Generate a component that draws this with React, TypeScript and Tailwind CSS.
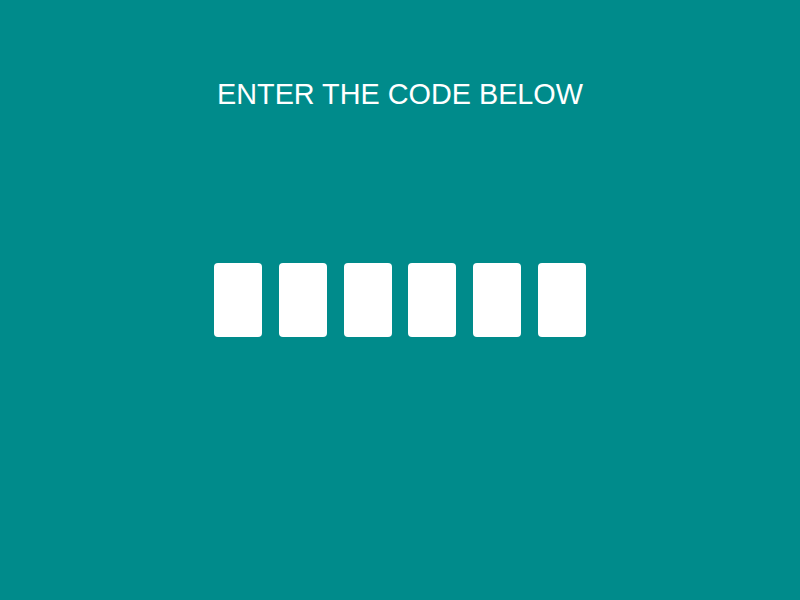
export default function App() {
  return (
    <div className="w-[800px] h-[600px] bg-[#008b8b] flex flex-col items-center pt-[78px]" style={{ fontFamily: '"Liberation Sans", Arial, sans-serif' }}>
      <h1 className="text-white text-[28.8px] leading-[32px] font-normal">ENTER THE CODE BELOW</h1>
      <div className="mt-[153px] flex gap-[16.8px]">
        {[0, 1, 2, 3, 4, 5].map((i) => (
          <div key={i} className="w-12 h-[74px] bg-white rounded-[4px]" />
        ))}
      </div>
    </div>
  );
}
